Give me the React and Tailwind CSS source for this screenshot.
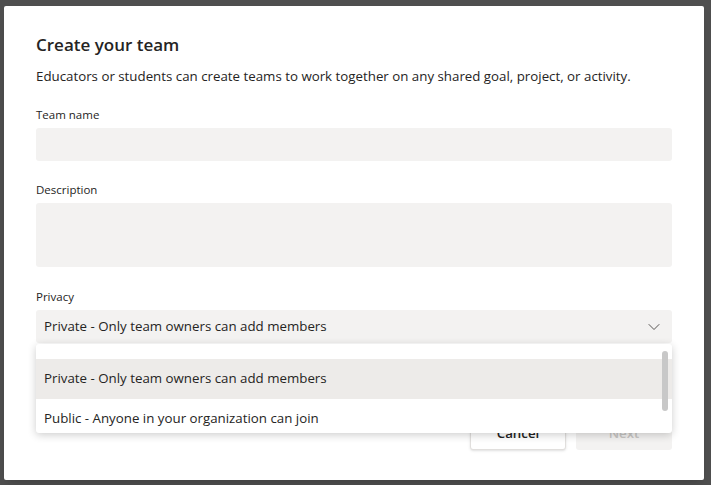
import { ChevronDown } from "lucide-react";

const font = { fontFamily: '"Open Sans", "Noto Sans", sans-serif' };

function Field({ label, className = "", children }) {
  return (
    <div className={className}>
      <p className="text-[11.5px] leading-[16px] text-[#252423]">{label}</p>
      <div className="mt-[5px]">{children}</div>
    </div>
  );
}

export default function App() {
  return (
    <div className="h-[485px] w-[711px] overflow-hidden bg-[#4f4f4f] pl-[4px] pt-[6px]" style={font}>
      <div className="flex h-[474px] w-[700px] flex-col rounded-[2px] bg-white px-[32px] pt-[27px] text-[#252423] shadow-lg">
        <h1 className="text-[17px] font-semibold leading-[24px]">Create your team</h1>
        <p className="mt-[9px] text-[13.3px] leading-[20px]">
          Educators or students can create teams to work together on any shared goal, project, or activity.
        </p>

        <Field label="Team name" className="mt-[21px]">
          <div className="h-[33px] w-full rounded-[3px] bg-[#f3f2f1]" />
        </Field>
        <Field label="Description" className="mt-[21px]">
          <div className="h-[64px] w-full rounded-[3px] bg-[#f3f2f1]" />
        </Field>
        <Field label="Privacy" className="mt-[22px]">
          <div className="relative">
            <div className="flex h-[33px] w-full items-center justify-between rounded-[3px] bg-[#f3f2f1] pl-[8px] pr-[8px]">
              <span className="text-[13.3px]">Private - Only team owners can add members</span>
              <ChevronDown size={20} strokeWidth={1.1} className="text-[#484644]" />
            </div>
            <div className="absolute left-0 right-0 top-[34px] z-10 h-[89px] rounded-[3px] bg-white pt-[15px] shadow-[0_2px_8px_rgba(0,0,0,0.2)]">
              <div className="flex h-[40px] items-center bg-[#edebe9] pl-[8px] text-[13.3px]">
                Private - Only team owners can add members
              </div>
              <div className="flex h-[34px] items-center pl-[8px] pt-[5px] text-[13.3px]">
                Public - Anyone in your organization can join
              </div>
              <div className="absolute right-[4px] top-[7px] h-[60px] w-[6px] rounded-full bg-[#c8c8c8]" />
            </div>
          </div>
        </Field>

        <div className="mt-[75px] flex justify-end gap-[10px]">
          <button className="h-[32px] w-[96px] rounded-[3px] border border-[#e1dfdd] bg-white text-[13.3px] font-semibold shadow-sm">
            Cancel
          </button>
          <button className="h-[32px] w-[96px] rounded-[3px] bg-[#f3f2f1] text-[13.3px] font-semibold text-[#c8c6c4]">
            Next
          </button>
        </div>
      </div>
    </div>
  );
}
